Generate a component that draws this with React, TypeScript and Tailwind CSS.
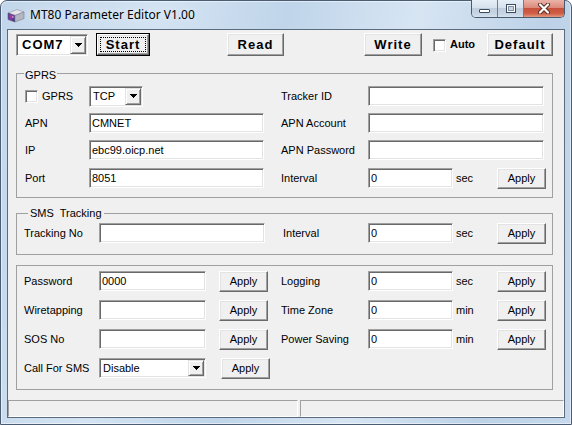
import React from "react";

const T11 = "text-[11px] leading-[13px] font-['Liberation_Sans',Arial,sans-serif] text-black whitespace-nowrap";
const sunken =
  "border border-t-[#a0a0a0] border-l-[#a0a0a0] border-b-white border-r-white shadow-[inset_1px_1px_0_#696969,inset_-1px_-1px_0_#e3e3e3]";
const raised =
  "border border-t-white border-l-white border-b-[#696969] border-r-[#696969] shadow-[inset_-1px_-1px_0_#a0a0a0,inset_1px_1px_0_#e3e3e3]";
const bbtn = "text-[13px] leading-[15px] font-bold tracking-[1px] font-['Liberation_Sans',Arial,sans-serif] text-black";

function Tri() {
  return (
    <svg width="7" height="4" viewBox="0 0 7 4" shapeRendering="crispEdges">
      <path d="M0 0h7v1h-1v1h-1v1h-1v1h-1v-1h-1v-1h-1v-1h-1z" fill="#000" />
    </svg>
  );
}

function DropBtn() {
  return (
    <div className="w-[16px] h-full shrink-0 flex items-center justify-center bg-[#f0f0f0] border border-t-[#e3e3e3] border-l-[#e3e3e3] border-b-[#696969] border-r-[#696969] shadow-[inset_1px_1px_0_#ffffff,inset_-1px_-1px_0_#a0a0a0]">
      <Tri />
    </div>
  );
}

function Input({ w, value }: { w: string; value?: string }) {
  return (
    <div className={`${w} h-[20px] shrink-0 bg-white ${sunken} pl-[2px] pr-[2px] flex items-center overflow-hidden ${T11}`}>
      {value}
    </div>
  );
}

function Combo({ w, h, value, text }: { w: string; h: string; value: string; text: string }) {
  return (
    <div className={`${w} ${h} shrink-0 bg-white ${sunken} p-[1px] flex`}>
      <div className={`flex-1 flex items-center ${text}`}>{value}</div>
      <DropBtn />
    </div>
  );
}

function Apply({ cls = "" }: { cls?: string }) {
  return (
    <div className={`w-[49px] h-[21px] shrink-0 bg-[#f0f0f0] ${raised} flex items-center justify-center ${T11} ${cls}`}>
      Apply
    </div>
  );
}

function Check() {
  return <div className={`w-[13px] h-[13px] shrink-0 bg-white ${sunken}`} />;
}

function Btn({ w, label, cls = "" }: { w: string; label: string; cls?: string }) {
  return (
    <div className={`${w} h-[23px] shrink-0 bg-[#f0f0f0] ${raised} flex items-center justify-center ${bbtn} ${cls}`}>
      {label}
    </div>
  );
}

function Icon() {
  return (
    <svg width="18" height="16" viewBox="0 0 18 16" className="shrink-0">
      <defs>
        <linearGradient id="fr" x1="0" y1="0" x2="1" y2="1">
          <stop offset="0" stopColor="#3a3f9a" />
          <stop offset="0.5" stopColor="#8a3aa8" />
          <stop offset="1" stopColor="#2a2f7a" />
        </linearGradient>
      </defs>
      <polygon points="1,6 10,2.5 17,5 8,8.5" fill="#e4e4ea" stroke="#8a8c98" strokeWidth="0.6" />
      <polygon points="1,6 8,8.5 8,15 1,12.5" fill="url(#fr)" stroke="#55577a" strokeWidth="0.6" />
      <polygon points="8,8.5 17,5 17,11.5 8,15" fill="#b4b6c4" stroke="#7a7c8a" strokeWidth="0.6" />
      <rect x="2.5" y="8.5" width="2" height="1.2" fill="#e0404a" />
      <rect x="5" y="9.5" width="1.5" height="1" fill="#d9d9ff" />
    </svg>
  );
}

function Controls() {
  return (
    <div className="ml-auto mr-[6px] -mt-[1px] flex h-[18px] shrink-0 self-start rounded-b-[5px] border border-t-0 border-[#4a5a6e] overflow-hidden">
      <div className="w-[26px] h-full border-r border-[#6d7d90] bg-[linear-gradient(#e6eef7,#d7e2ee_45%,#bfcede_50%,#c8d6e5_85%,#d8e4f0)] flex items-start justify-center">
        <div className="mt-[9px] w-[11px] h-[4px] bg-white border border-[#3a4a5e] rounded-[1px]" />
      </div>
      <div className="w-[26px] h-full border-r border-[#6d7d90] bg-[linear-gradient(#e6eef7,#d7e2ee_45%,#bfcede_50%,#c8d6e5_85%,#d8e4f0)] flex items-start justify-center">
        <div className="mt-[4px] w-[10px] h-[9px] bg-white border border-[#3a4a5e] p-[1px]">
          <div className="w-full h-full bg-[#c9d5e3] border border-[#7f8ea0]" />
        </div>
      </div>
      <div className="w-[40px] h-full bg-[linear-gradient(#eab3a8,#dc8b7b_45%,#c6513c_50%,#cf5f45_80%,#e49a80)] flex items-center justify-center">
        <svg width="14" height="11" viewBox="0 0 14 11">
          <path d="M3 1.5 L11 9.5 M11 1.5 L3 9.5" stroke="#5a2a22" strokeWidth="4" strokeLinecap="round" />
          <path d="M3 1.5 L11 9.5 M11 1.5 L3 9.5" stroke="#ffffff" strokeWidth="2.2" strokeLinecap="round" />
        </svg>
      </div>
    </div>
  );
}

export default function App() {
  return (
    <div className="w-[572px] h-[425px] flex flex-col border border-[#4b5d72] rounded-t-[7px] bg-[linear-gradient(100deg,#c2d6eb_0%,#d3e3f2_25%,#c0d5ea_45%,#d7e5f3_65%,#bdd2e8_85%,#c6d9ec_100%)] shadow-[inset_0_0_0_1px_rgba(255,255,255,0.5)] font-['Liberation_Sans',Arial,sans-serif]">
      {/* title bar */}
      <div className="h-[28px] shrink-0 flex items-start">
        <div className="ml-[6px] mt-[6px]">
          <Icon />
        </div>
        <span className="ml-[5px] mt-[5px] text-[12px] leading-[17px] text-black font-['Noto_Sans','Open_Sans',sans-serif] [text-shadow:0_0_6px_rgba(255,255,255,0.9)]">
          MT80 Parameter Editor V1.00
        </span>
        <Controls />
      </div>

      {/* client area */}
      <div className="ml-[6px] w-[558px] h-[389px] shrink-0 border border-[#5b6b7e] bg-[#f0f0f0] flex flex-col">
        <div className="pl-[8px] pr-[11px] flex flex-col">
          {/* top row */}
          <div className="mt-[3px] h-[23px] flex items-center">
            <Combo w="w-[72px]" h="h-[22px]" value="COM7" text={`pl-[4px] ${bbtn} tracking-[0px]`} />
            <div className="ml-[8px] w-[54px] h-[23px] shrink-0 border border-black">
              <div className={`w-full h-full bg-[#f0f0f0] ${raised} p-[2px]`}>
                <div className={`w-full h-full border border-dotted border-black flex items-center justify-center ${bbtn}`}>
                  Start
                </div>
              </div>
            </div>
            <Btn w="w-[57px]" label="Read" cls="ml-[77px]" />
            <Btn w="w-[58px]" label="Write" cls="ml-[80px]" />
            <div className="ml-[11px] mt-[2px]">
              <Check />
            </div>
            <span className="ml-[4px] text-[11px] leading-[13px] font-bold text-black">Auto</span>
            <Btn w="w-[66px]" label="Default" cls="ml-auto" />
          </div>

          {/* GPRS group */}
          <div className="mt-[17px] w-[537px] h-[125px] border border-[#a0a0a0] flex flex-col">
            <span className={`-mt-[5px] ml-[7px] px-[1px] self-start bg-[#f0f0f0] ${T11}`}>GPRS</span>
            <div className="mt-[4px] pl-[8px] flex flex-col">
              <div className="h-[20px] flex items-center">
                <div className="w-[256px] flex items-center">
                  <div className="w-[64px] flex items-center">
                    <Check />
                    <span className={`ml-[4px] ${T11}`}>GPRS</span>
                  </div>
                  <Combo w="w-[54px]" h="h-[21px]" value="TCP" text={`pl-[2px] ${T11}`} />
                </div>
                <div className={`w-[87px] ${T11}`}>Tracker ID</div>
                <Input w="w-[176px]" />
              </div>
              <div className="mt-[7px] h-[20px] flex items-center">
                <div className="w-[256px] flex items-center">
                  <div className={`w-[64px] ${T11}`}>APN</div>
                  <Input w="w-[175px]" value="CMNET" />
                </div>
                <div className={`w-[87px] ${T11}`}>APN Account</div>
                <Input w="w-[176px]" />
              </div>
              <div className="mt-[7px] h-[20px] flex items-center">
                <div className="w-[256px] flex items-center">
                  <div className={`w-[64px] ${T11}`}>IP</div>
                  <Input w="w-[175px]" value="ebc99.oicp.net" />
                </div>
                <div className={`w-[87px] ${T11}`}>APN Password</div>
                <Input w="w-[176px]" />
              </div>
              <div className="mt-[8px] h-[20px] flex items-center">
                <div className="w-[256px] flex items-center">
                  <div className={`w-[64px] ${T11}`}>Port</div>
                  <Input w="w-[175px]" value="8051" />
                </div>
                <div className={`w-[87px] ${T11}`}>Interval</div>
                <Input w="w-[85px]" value="0" />
                <div className={`w-[44px] pl-[3px] ${T11}`}>sec</div>
                <Apply />
              </div>
            </div>
          </div>

          {/* SMS Tracking group */}
          <div className="mt-[15px] w-[537px] h-[42px] border border-[#a0a0a0] flex flex-col">
            <span className={`-mt-[7px] ml-[11px] px-[2px] self-start bg-[#f0f0f0] whitespace-pre ${T11}`}>SMS  Tracking</span>
            <div className="mt-[3px] pl-[7px] h-[20px] flex items-center">
              <div className="w-[259px] flex items-center">
                <div className={`w-[75px] ${T11}`}>Tracking No</div>
                <Input w="w-[166px]" />
              </div>
              <div className={`w-[85px] ${T11}`}>Interval</div>
              <Input w="w-[85px]" value="0" />
              <div className={`w-[44px] pl-[3px] ${T11}`}>sec</div>
              <Apply />
            </div>
          </div>

          {/* misc group */}
          <div className="mt-[10px] w-[537px] h-[125px] border border-[#a0a0a0] pt-[5px] pl-[7px] flex flex-col">
            {[
              ["Password", "0000", "Logging", "sec"],
              ["Wiretapping", "", "Time Zone", "min"],
              ["SOS No", "", "Power Saving", "min"],
            ].map(([l, v, r, u], i) => (
              <div key={l} className={`${i === 0 ? "" : "mt-[9px]"} h-[20px] flex items-center`}>
                <div className="w-[257px] flex items-center">
                  <div className={`w-[75px] ${T11}`}>{l}</div>
                  <Input w="w-[107px]" value={v} />
                  <Apply cls="ml-[13px]" />
                </div>
                <div className={`w-[87px] ${T11}`}>{r}</div>
                <Input w="w-[85px]" value="0" />
                <div className={`w-[44px] pl-[3px] ${T11}`}>{u}</div>
                <Apply />
              </div>
            ))}
            <div className="mt-[9px] h-[20px] flex items-center">
              <div className={`w-[75px] ${T11}`}>Call For SMS</div>
              <Combo w="w-[107px]" h="h-[20px]" value="Disable" text={`pl-[2px] ${T11}`} />
              <Apply cls="ml-[15px]" />
            </div>
          </div>
        </div>

        {/* status bar */}
        <div className="mt-auto h-[17px] flex gap-[2px]">
          <div className="w-[290px] h-full border border-t-[#a0a0a0] border-l-[#a0a0a0] border-b-white border-r-white" />
          <div className="flex-1 h-full border border-t-[#a0a0a0] border-l-[#a0a0a0] border-b-white border-r-white" />
        </div>
      </div>
    </div>
  );
}
